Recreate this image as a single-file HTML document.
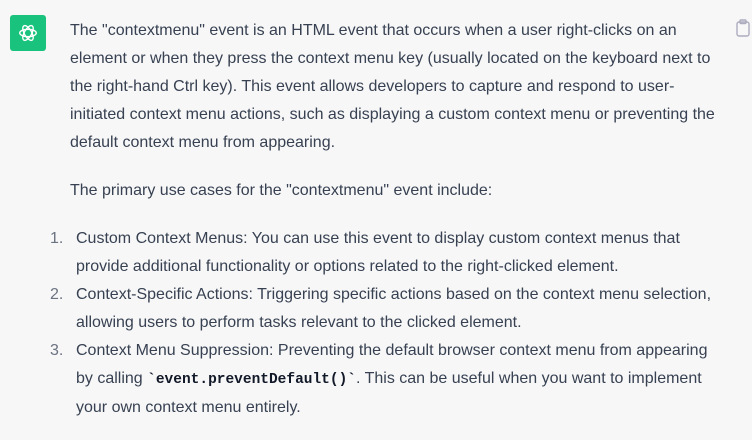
<!DOCTYPE html>
<html><head><meta charset="utf-8"><style>
html,body{margin:0;padding:0;background:#f7f7f8;width:752px;height:440px;overflow:hidden}
body{font-family:"Liberation Sans",sans-serif;font-size:16px;color:#374151;line-height:28px}
.av{position:absolute;left:10px;top:15px;width:36px;height:36px;background:#19c37d;border-radius:3px;display:flex;align-items:center;justify-content:center}
.cp{position:absolute;left:736px;top:19px}
.t{position:absolute;left:70px;top:17px;white-space:nowrap}
p{margin:0 0 20px 0}
ol{margin:0;padding:0;list-style:none}
li{position:relative;padding-left:6px}
li span.n{position:absolute;left:-20px;color:#6b7280}
code{font-family:"Liberation Mono",monospace;font-weight:bold;font-size:14.5px;color:#111827}
</style></head><body>
<div class="av"><svg width="22" height="22" viewBox="0 0 24 24" fill="none" stroke="#fff" stroke-width="1.5"><ellipse cx="12" cy="12" rx="9" ry="4" transform="rotate(0 12 12)"/><ellipse cx="12" cy="12" rx="9" ry="4" transform="rotate(60 12 12)"/><ellipse cx="12" cy="12" rx="9" ry="4" transform="rotate(120 12 12)"/></svg></div>
<svg class="cp" width="14" height="18" viewBox="0 0 14 18" fill="none" stroke="#acacbe" stroke-width="1.4"><rect x="1" y="3" width="12" height="14" rx="2"/><rect x="4" y="1" width="6" height="3.5" rx="1"/></svg>
<div class="t">
<p>The "contextmenu" event is an HTML event that occurs when a user right-clicks on an<br>element or when they press the context menu key (usually located on the keyboard next to<br>the right-hand Ctrl key). This event allows developers to capture and respond to user-<br>initiated context menu actions, such as displaying a custom context menu or preventing the<br>default context menu from appearing.</p>
<p>The primary use cases for the "contextmenu" event include:</p>
<ol>
<li><span class="n">1.</span>Custom Context Menus: You can use this event to display custom context menus that<br>provide additional functionality or options related to the right-clicked element.</li>
<li><span class="n">2.</span>Context-Specific Actions: Triggering specific actions based on the context menu selection,<br>allowing users to perform tasks relevant to the clicked element.</li>
<li><span class="n">3.</span>Context Menu Suppression: Preventing the default browser context menu from appearing<br>by calling <code>`event.preventDefault()`</code>. This can be useful when you want to implement<br>your own context menu entirely.</li>
</ol>
</div>
</body></html>
